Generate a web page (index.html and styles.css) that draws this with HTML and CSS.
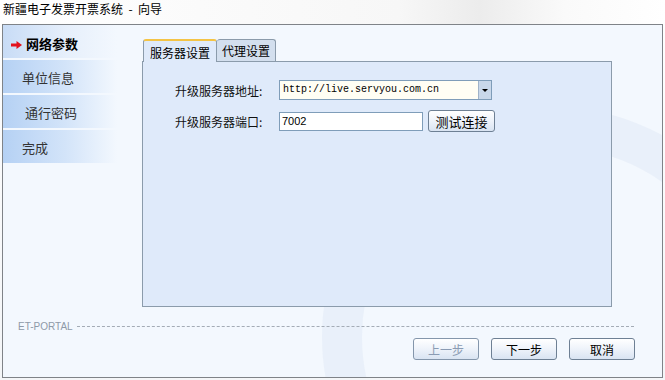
FILE: index.html
```html
<!DOCTYPE html>
<html lang="zh-CN">

<head>
    <meta charset="UTF-8">
    <title>新疆电子发票开票系统 - 向导</title>
    <link rel="stylesheet" href="styles.css">
</head>

<body>
    <div class="title-bar">新疆电子发票开票系统 &nbsp;-&nbsp; 向导</div>

    <div class="wizard">
        <div class="wizard__body">
            <ul class="steps">
                <li class="steps__item steps__item--active">
                    <svg class="steps__arrow" width="11" height="8" viewBox="0 0 11 8">
                        <path d="M0 2.5h5.5V0L11 4 5.5 8V5.5H0z" fill="#e3101c" />
                    </svg>网络参数
                </li>
                <li class="steps__item">单位信息</li>
                <li class="steps__item steps__item--pad">通行密码</li>
                <li class="steps__item">完成</li>
            </ul>

            <div class="content">
                <div class="tabs">
                    <div class="tab tab--active">服务器设置</div>
                    <div class="tab">代理设置</div>
                </div>
                <div class="tab-panel">
                    <div class="field">
                        <label class="field__label">升级服务器地址:</label>
                        <div class="combo">
                            <span class="combo__text">http://live.servyou.com.cn</span>
                            <span class="combo__btn"></span>
                        </div>
                    </div>
                    <div class="field">
                        <label class="field__label">升级服务器端口:</label>
                        <input class="text-input" type="text" value="7002">
                        <button class="btn btn--small">测试连接</button>
                    </div>
                </div>
            </div>
        </div>

        <div class="wizard__footer">
            <div class="brand-line">
                <span class="brand-line__name">ET-PORTAL</span>
                <span class="brand-line__rule"></span>
            </div>
            <div class="actions">
                <button class="btn btn--disabled">上一步</button>
                <button class="btn">下一步</button>
                <button class="btn">取消</button>
            </div>
        </div>
    </div>
</body>

</html>
```

FILE: styles.css
```css
html,
body {
    margin: 0;
    width: 665px;
    height: 380px;
    overflow: hidden;
}

body {
    font-family: "Noto Sans CJK SC", "Noto Sans", sans-serif;
    font-size: 12px;
    color: #000;
    background: linear-gradient(180deg, #ffffff 0%, #f4f6f8 100%);
}

.title-bar {
    height: 24px;
    line-height: 17px;
    padding-left: 3px;
    background: linear-gradient(90deg, #ffffff 0%, #f7f7f7 60%, #ececec 72%, #fafafa 85%, #ffffff 100%);
}

.wizard {
    margin: 0 2px;
    width: 659px;
    height: 352px;
    border: 1px solid #7f8388;
    background: #f3f8fe;
    display: flex;
    flex-direction: column;
    position: relative;
    overflow: hidden;
}

/* faint watermark swirl behind the content */
.wizard::before {
    content: "";
    position: absolute;
    right: -120px;
    bottom: -190px;
    width: 380px;
    height: 380px;
    border-radius: 50%;
    border: 40px solid rgba(226, 235, 246, 0.6);
}

.wizard__body,
.wizard__footer {
    position: relative;
}

.wizard__body {
    display: flex;
    height: 265px;
}

/* left step list */
.steps {
    list-style: none;
    margin: 0;
    padding: 0;
    width: 139px;
}

.steps__item {
    height: 33px;
    line-height: 36px;
    margin-bottom: 2px;
    padding-left: 19px;
    font-size: 13px;
    color: #333;
    background: linear-gradient(90deg, #b5d1f4 0%, #d3e4f9 45%, rgba(243, 248, 254, 0) 82%);
}

.steps__item--pad {
    padding-left: 22px;
}

.steps__item--active {
    padding-left: 8px;
    line-height: 38px;
    font-weight: bold;
    color: #000;
    background: linear-gradient(90deg, #c8dcf6 0%, #e6effb 45%, rgba(243, 248, 254, 0) 82%);
}

.steps__arrow {
    margin-right: 4px;
    vertical-align: 0;
}

/* right tab area */
.content {
    padding-top: 12px;
    width: 470px;
}

.tabs {
    display: flex;
    align-items: flex-end;
    height: 24px;
    padding-left: 1px;
}

.tab {
    height: 21px;
    line-height: 22px;
    padding: 0 5px;
    font-size: 12px;
    border: 1px solid #8b9bab;
    border-bottom: none;
    border-left: none;
    border-radius: 3px 3px 0 0;
    background: #d3dfee;
}

.tab--active {
    padding: 0 6px;
    line-height: 23px;
    border: 1px solid #8b9bab;
    border-top: 2px solid #f4c446;
    border-bottom: none;
    background: #dfeafa;
    position: relative;
    top: 1px;
}

.tab-panel {
    height: 227px;
    border: 1px solid #8b9bab;
    background: #dfeafa;
    padding: 17px 0 0 32px;
}

.field {
    display: flex;
    align-items: center;
    height: 22px;
    margin-bottom: 9px;
}

.field__label {
    width: 104px;
    font-size: 12px;
    color: #111;
}

.combo {
    display: flex;
    width: 211px;
    height: 18px;
    border: 1px solid #7f9db9;
    background: #fffef4;
}

.combo__text {
    flex: 1;
    padding-left: 3px;
    line-height: 18px;
    font-family: "Liberation Mono", monospace;
    font-size: 10px;
}

.combo__btn {
    width: 12px;
    border-left: 1px solid #9fb2c8;
    background: #c9d8ea;
    position: relative;
}

.combo__btn::after {
    content: "";
    position: absolute;
    left: 3px;
    top: 8px;
    border-left: 3px solid transparent;
    border-right: 3px solid transparent;
    border-top: 3px solid #000;
}

.text-input {
    box-sizing: border-box;
    width: 144px;
    height: 19px;
    margin: 0 5px 0 0;
    padding: 0 2px;
    border: 1px solid #7f9db9;
    background: #fff;
    font-family: "Liberation Sans", sans-serif;
    font-size: 11px;
}

/* footer */
.wizard__footer {
    flex: 1;
    padding: 0 27px 0 15px;
}

.brand-line {
    display: flex;
    align-items: center;
    margin-top: 30px;
    height: 12px;
}

.brand-line__name {
    font-family: "Liberation Sans", sans-serif;
    font-size: 10px;
    color: #8e9aa8;
    margin-right: 4px;
}

.brand-line__rule {
    flex: 1;
    border-top: 1px dashed #a4acb6;
    margin-right: 1px;
}

.actions {
    display: flex;
    justify-content: flex-end;
    gap: 12px;
    margin-top: 6px;
}

.btn {
    width: 66px;
    height: 22px;
    padding: 0;
    border: 1px solid #6e8094;
    border-radius: 3px;
    background: linear-gradient(180deg, #ffffff 0%, #eef3fa 50%, #d9e4f2 100%);
    font-family: "Noto Sans CJK SC", sans-serif;
    font-size: 12px;
    color: #000;
}

.btn--small {
    width: 67px;
    font-size: 13px;
}

.btn--disabled {
    color: #8a9bb3;
    border-color: #8496ab;
}
```
